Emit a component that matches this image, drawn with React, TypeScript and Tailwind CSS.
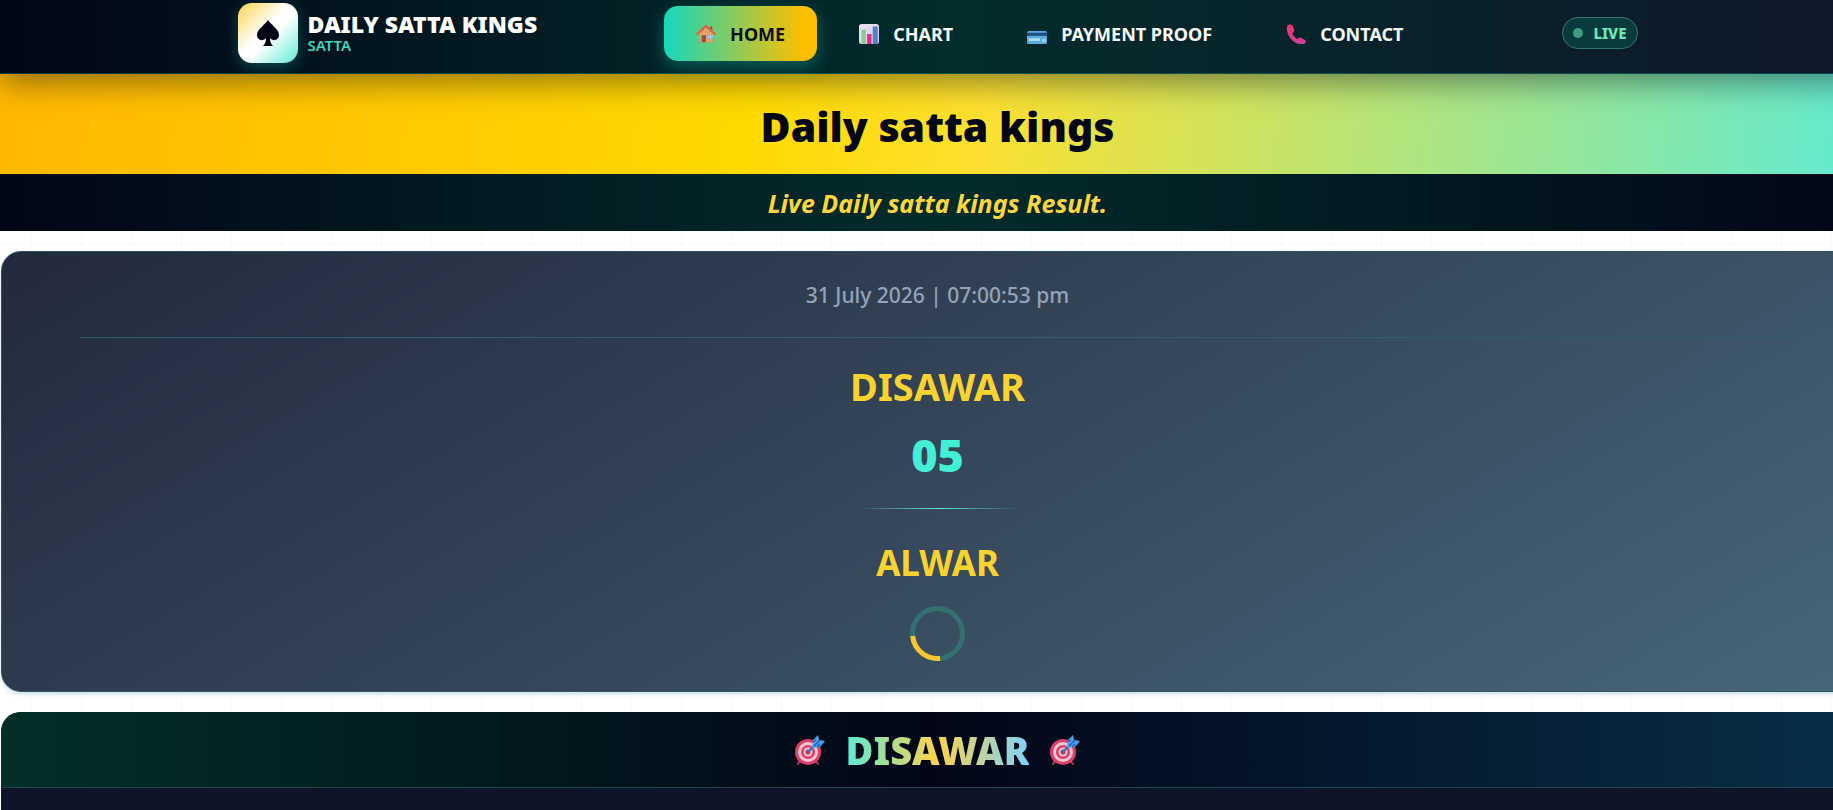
import React, { FC, ReactNode } from "react";

interface NavItem {
  label: string;
  icon: ReactNode;
  active?: boolean;
}

const HomeIcon: FC = () => (
  <svg viewBox="0 0 32 32" className="h-5 w-5" aria-hidden="true">
    <path d="M3 29c3-3 23-3 27 0v2H3z" fill="#6fb98a" />
    <path d="M22 4h4v9h-4z" fill="#b0503c" />
    <path d="M6 15 16 6l11 9v14H6z" fill="#e8a06a" />
    <path d="M9 18h7v11H9z" fill="#8a5548" />
    <path d="M19 17h8v7h-8z" fill="#7fb6e6" />
    <path d="M23 17v7M19 20.500h8" stroke="#d7e6f2" />
    <path d="M2 16 16 3l14 13" fill="none" stroke="#e0653f" strokeWidth="3.500" strokeLinejoin="round" strokeLinecap="round" />
  </svg>
);

const ChartIcon: FC = () => (
  <svg viewBox="0 0 32 32" className="h-5 w-5" aria-hidden="true">
    <defs>
      <linearGradient id="chartBg" x1="0" y1="0" x2="1" y2="1">
        <stop offset="0" stopColor="#f3e2f4" />
        <stop offset="1" stopColor="#cfc6ea" />
      </linearGradient>
    </defs>
    <rect width="32" height="32" rx="4" fill="url(#chartBg)" />
    <path d="M4 9h7v23H4z" fill="#86cf93" />
    <path d="M13 16h7v16h-7z" fill="#dd2f7f" />
    <path d="M22 4h8v28h-8z" fill="#4f83c6" />
  </svg>
);

const CardIcon: FC = () => (
  <svg viewBox="0 0 32 32" className="h-5 w-5" aria-hidden="true">
    <rect y="11" width="32" height="21" rx="3" fill="#5aaee2" />
    <path d="M0 14h32v5H0z" fill="#1f4f7c" />
    <path d="M3 23h18v4H3z" fill="#b9dcf3" />
    <circle cx="27" cy="26" r="3" fill="#a6d3f0" />
  </svg>
);

const PhoneIcon: FC = () => (
  <svg viewBox="0 0 32 32" className="h-5 w-5" aria-hidden="true">
    <defs>
      <linearGradient id="phoneFill" x1="0" y1="0" x2="1" y2="1">
        <stop offset="0" stopColor="#f0356a" />
        <stop offset="1" stopColor="#c341a0" />
      </linearGradient>
    </defs>
    <path
      d="M2 3c2-3 7-3 9 0l2 6c1 3-1 4-3 6 2 4 5 7 8 9 2-2 4-3 6-2l6 3c3 2 2 6-1 7-8 2-16-2-21-8C3 18 0 10 2 3z"
      fill="url(#phoneFill)"
    />
  </svg>
);

const TargetIcon: FC = () => (
  <svg viewBox="0 0 32 32" className="h-8 w-8" aria-hidden="true">
    <path d="m6 26-2 4M21 26l3 4" stroke="#b8355a" strokeWidth="2" strokeLinecap="round" />
    <circle cx="14" cy="18" r="13" fill="#dc3f68" />
    <circle cx="14" cy="18" r="10" fill="#f4c3d2" />
    <circle cx="14" cy="18" r="7" fill="#dc3f68" />
    <circle cx="14" cy="18" r="4.500" fill="#f4c3d2" />
    <circle cx="14" cy="18" r="2.500" fill="#b53a60" />
    <path d="m14 18 9-9" stroke="#2f76b8" strokeWidth="2" strokeLinecap="round" />
    <path d="m18 13 1-7 5-5 1 5 6 1-5 6-7 1z" fill="#4aa3ee" />
    <path d="m20 12 6-6M19 8l3-2M23 13l3-3" stroke="#1f5fb0" strokeWidth="1.500" />
  </svg>
);

const navItems: NavItem[] = [
  { label: "HOME", icon: <HomeIcon />, active: true },
  { label: "CHART", icon: <ChartIcon /> },
  { label: "PAYMENT PROOF", icon: <CardIcon /> },
  { label: "CONTACT", icon: <PhoneIcon /> },
];

const Header: FC = () => (
  <header className="relative z-10 border-b border-teal-400/25 bg-[linear-gradient(90deg,#020617,#022c2b_50%,#0f172a)] pt-[3px] pb-[10px] shadow-[0_8px_32px_rgba(2,6,23,0.45)]">
    <div className="mx-auto flex h-[60px] max-w-[1400px] items-center justify-between">
      <a href="#" className="flex items-center gap-[10px]">
        <span className="flex h-[60px] w-[60px] items-center justify-center rounded-[14px] bg-[linear-gradient(135deg,#fcd34d,#ffffff_45%,#ffffff_55%,#5eead4)] shadow-[0_4px_14px_rgba(20,184,166,0.35)]">
          <svg viewBox="0 0 24 28" className="h-7 w-6" aria-hidden="true">
            <path
              d="M12 1C9 6 1 10 1 16c0 5 6 7 9 3 0 4-1 6-3 8h10c-2-2-3-4-3-8 3 4 9 2 9-3 0-6-8-10-11-15z"
              fill="#020617"
            />
          </svg>
        </span>
        <span className="flex flex-col">
          <span className="text-[23px] leading-6 font-black text-white">
            DAILY SATTA KINGS
          </span>
          <span className="text-[15px] leading-[18px] font-semibold text-[#3fd6bd]">
            SATTA
          </span>
        </span>
      </a>

      <nav className="flex items-center gap-[10px]">
        {navItems.map((item) => (
          <a
            key={item.label}
            href="#"
            className={
              item.active
                ? "flex h-[55px] items-center gap-[14px] rounded-[14px] bg-[linear-gradient(90deg,#14d8bd,#fbbf00_90%)] px-8 pt-[2px] text-[18px] font-bold text-[#0b0f14] shadow-[0_6px_18px_rgba(20,184,166,0.4)]"
                : "flex h-[55px] items-center gap-[14px] rounded-[14px] px-8 pt-[2px] text-[18px] font-bold text-slate-50"
            }
          >
            {item.icon}
            <span>{item.label}</span>
          </a>
        ))}
      </nav>

      <div className="flex h-8 items-center gap-[10px] rounded-full border border-[#35766f] bg-[#0a3b3c] px-[10px] text-[15px] font-extrabold text-[#6ee7b7]">
        <span className="h-[10px] w-[10px] rounded-full bg-[#3f9c83]" />
        <span>LIVE</span>
      </div>
    </div>
  </header>
);

const LiveCard: FC = () => (
  <section className="mx-px rounded-[20px] border border-[#2f5560] bg-[linear-gradient(150deg,#23293d,#35475a_50%,#47667a)] px-[78px] pt-7 pb-[30px] text-center shadow-[0_2px_4px_rgba(56,130,180,0.25)]">
    <div className="border-b border-[#2c6068] pb-[27px] text-[21px] leading-[30px] font-medium text-[#94a3b8]">
      31 July 2026 | 07:00:53 pm
    </div>
    <h2 className="mt-6 text-[38px] leading-[48px] font-bold text-[#fcd32e]">
      DISAWAR
    </h2>
    <p className="mt-[17px] text-[45px] leading-[56px] font-black text-[#43f0d5]">05</p>
    <div className="mx-auto mt-[25px] h-px w-[160px] bg-[linear-gradient(90deg,transparent,#5eead4,transparent)]" />
    <h2 className="mt-8 text-[35px] leading-[44px] font-bold text-[#fcd32e]">
      ALWAR
    </h2>
    <svg viewBox="0 0 55 55" className="mx-auto mt-[21px] block h-[55px] w-[55px]" aria-hidden="true">
      <circle cx="27.500" cy="27.500" r="25" fill="none" stroke="#33706f" strokeWidth="5" />
      <path d="M2.500 27.500a25 25 0 0 0 25 25" transform="rotate(-6 27.500 27.500)" fill="none" stroke="#fbc52d" strokeWidth="5" />
    </svg>
  </section>
);

const ResultSection: FC = () => (
  <section className="mx-px overflow-hidden rounded-t-[20px] bg-[#0f1428]">
    <div className="flex h-[76px] items-center justify-center gap-5 border-b border-[#1c4650] bg-[linear-gradient(90deg,#022f28,#020617_50%,#082f49)]">
      <TargetIcon />
      <h2 className="bg-[linear-gradient(90deg,#5eead4,#fcd34d_50%,#7dd3fc)] bg-clip-text text-[38px] leading-[48px] font-black text-transparent">
        DISAWAR
      </h2>
      <TargetIcon />
    </div>
    <div className="h-24" />
  </section>
);

const App: FC = () => (
  <div className="h-screen overflow-hidden bg-white font-['Noto_Sans','Open_Sans',sans-serif]">
    {/* page body runs slightly wider than the window */}
    <div className="-mr-[42px]">
      <Header />
      <div className="flex h-[100px] items-center justify-center bg-[linear-gradient(100deg,#ffb800,#ffd900_40%,#fde02f_52%,#5eead4)] pt-1">
        <h1 className="text-[41px] leading-[56px] font-black text-[#020617]">
          Daily satta kings
        </h1>
      </div>
      <div className="flex h-[57px] items-center justify-center bg-[linear-gradient(90deg,#020617,#022c2b_50%,#020617)]">
        <p className="text-[25px] leading-8 font-bold text-[#fcd53f] italic">
          Live Daily satta kings Result.
        </p>
      </div>
      <main className="flex flex-col gap-5 bg-[linear-gradient(90deg,rgba(20,120,110,0.04)_1px,transparent_1px),linear-gradient(rgba(20,120,110,0.04)_1px,transparent_1px)] bg-[size:50px_50px] bg-[position:31px_12px] pt-5">
        <LiveCard />
        <ResultSection />
      </main>
    </div>
  </div>
);

export default App;
